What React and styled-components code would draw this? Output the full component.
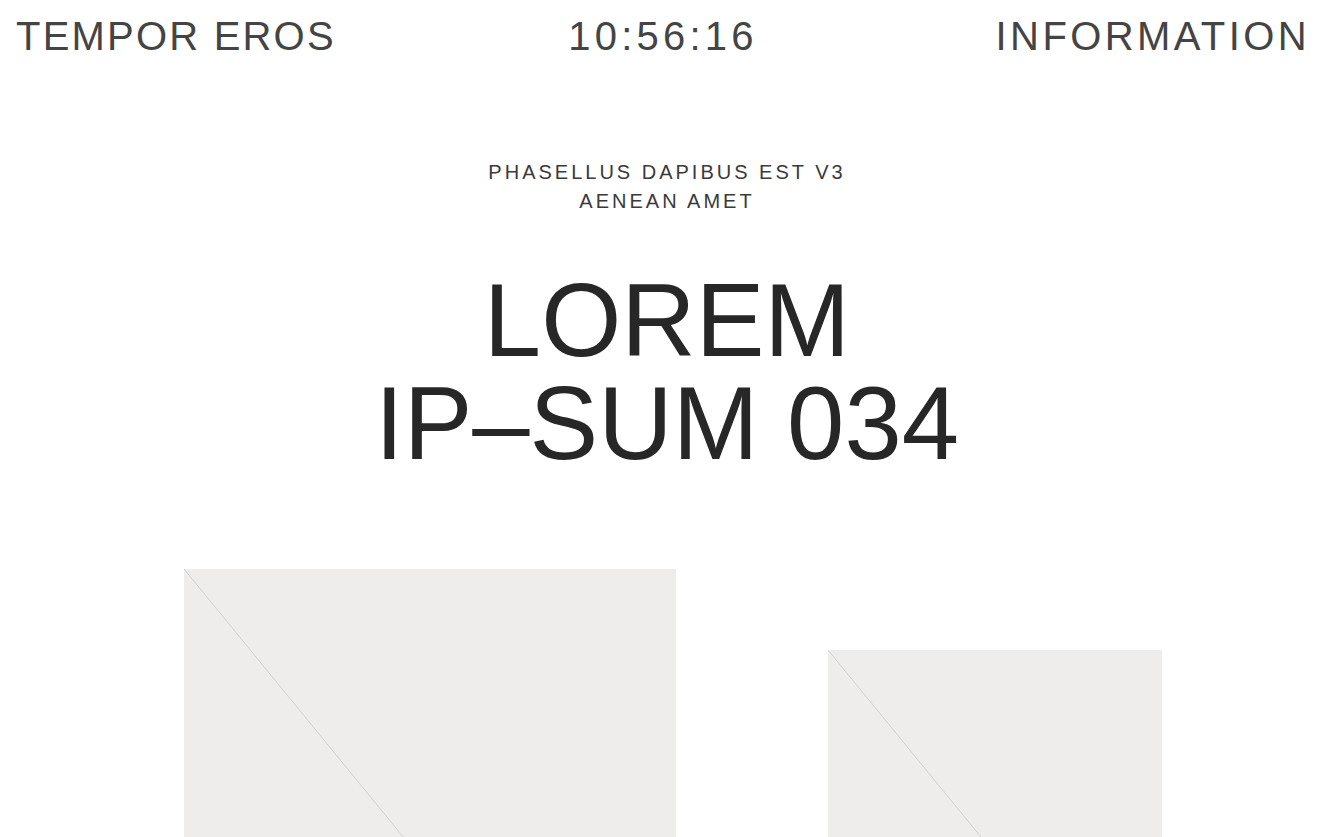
import React from 'react';
import styled, { createGlobalStyle } from 'styled-components';

const GlobalStyle = createGlobalStyle`
  html, body {
    margin: 0;
    padding: 0;
    background: #fff;
  }
  body {
    font-family: "Liberation Sans", Arial, sans-serif;
    color: #2a2a2a;
    overflow: hidden;
  }
`;

const Page = styled.div`
  width: 1334px;
  height: 837px;
  overflow: hidden;
`;

const TopBar = styled.header`
  display: grid;
  grid-template-columns: 1fr auto 1fr;
  align-items: center;
  padding: 12px 24px 0 16px;
  height: 48px;
`;

const NavItem = styled.div`
  font-size: 40px;
  line-height: 48px;
  letter-spacing: ${props => props.spacing || 2.2}px;
  color: #444;
  text-align: ${props => props.align || 'left'};
`;

const Hero = styled.section`
  display: flex;
  flex-direction: column;
  align-items: center;
  padding-top: 98px;
`;

const Kicker = styled.p`
  margin: 0;
  font-size: 20px;
  line-height: 29px;
  letter-spacing: 3px;
  text-align: center;
  color: #3a3a3a;
`;

const Title = styled.h1`
  margin: 53px 0 0;
  font-size: 103px;
  font-weight: 400;
  line-height: 103px;
  text-align: center;
  color: #272727;
`;

const Gallery = styled.section`
  display: flex;
  align-items: flex-start;
  gap: 152px;
  padding-left: 184px;
  margin-top: 94px;
`;

const Frame = styled.div`
  position: relative;
  width: ${props => props.w}px;
  aspect-ratio: 9 / 11;
  margin-top: ${props => props.offset || 0}px;
  background: #eeedeb;
  flex: none;

  svg {
    position: absolute;
    inset: 0;
    width: 100%;
    height: 100%;
  }
`;

function Placeholder({ w, offset }) {
  return (
    <Frame w={w} offset={offset}>
      <svg viewBox="0 0 100 100" preserveAspectRatio="none">
        <line x1="0" y1="0" x2="100" y2="100" stroke="#d2d0cd" strokeWidth="1" vectorEffect="non-scaling-stroke" />
      </svg>
    </Frame>
  );
}

export default function App() {
  return (
    <Page>
      <GlobalStyle />
      <TopBar>
        <NavItem>TEMPOR EROS</NavItem>
        <NavItem align="center" spacing={4.2}>10:56:16</NavItem>
        <NavItem align="right" spacing={3.4}>INFORMATION</NavItem>
      </TopBar>
      <Hero>
        <Kicker>
          PHASELLUS DAPIBUS EST V3
          <br />
          AENEAN AMET
        </Kicker>
        <Title>
          LOREM
          <br />
          IP–SUM 034
        </Title>
      </Hero>
      <Gallery>
        <Placeholder w={492} />
        <Placeholder w={334} offset={81} />
      </Gallery>
    </Page>
  );
}
